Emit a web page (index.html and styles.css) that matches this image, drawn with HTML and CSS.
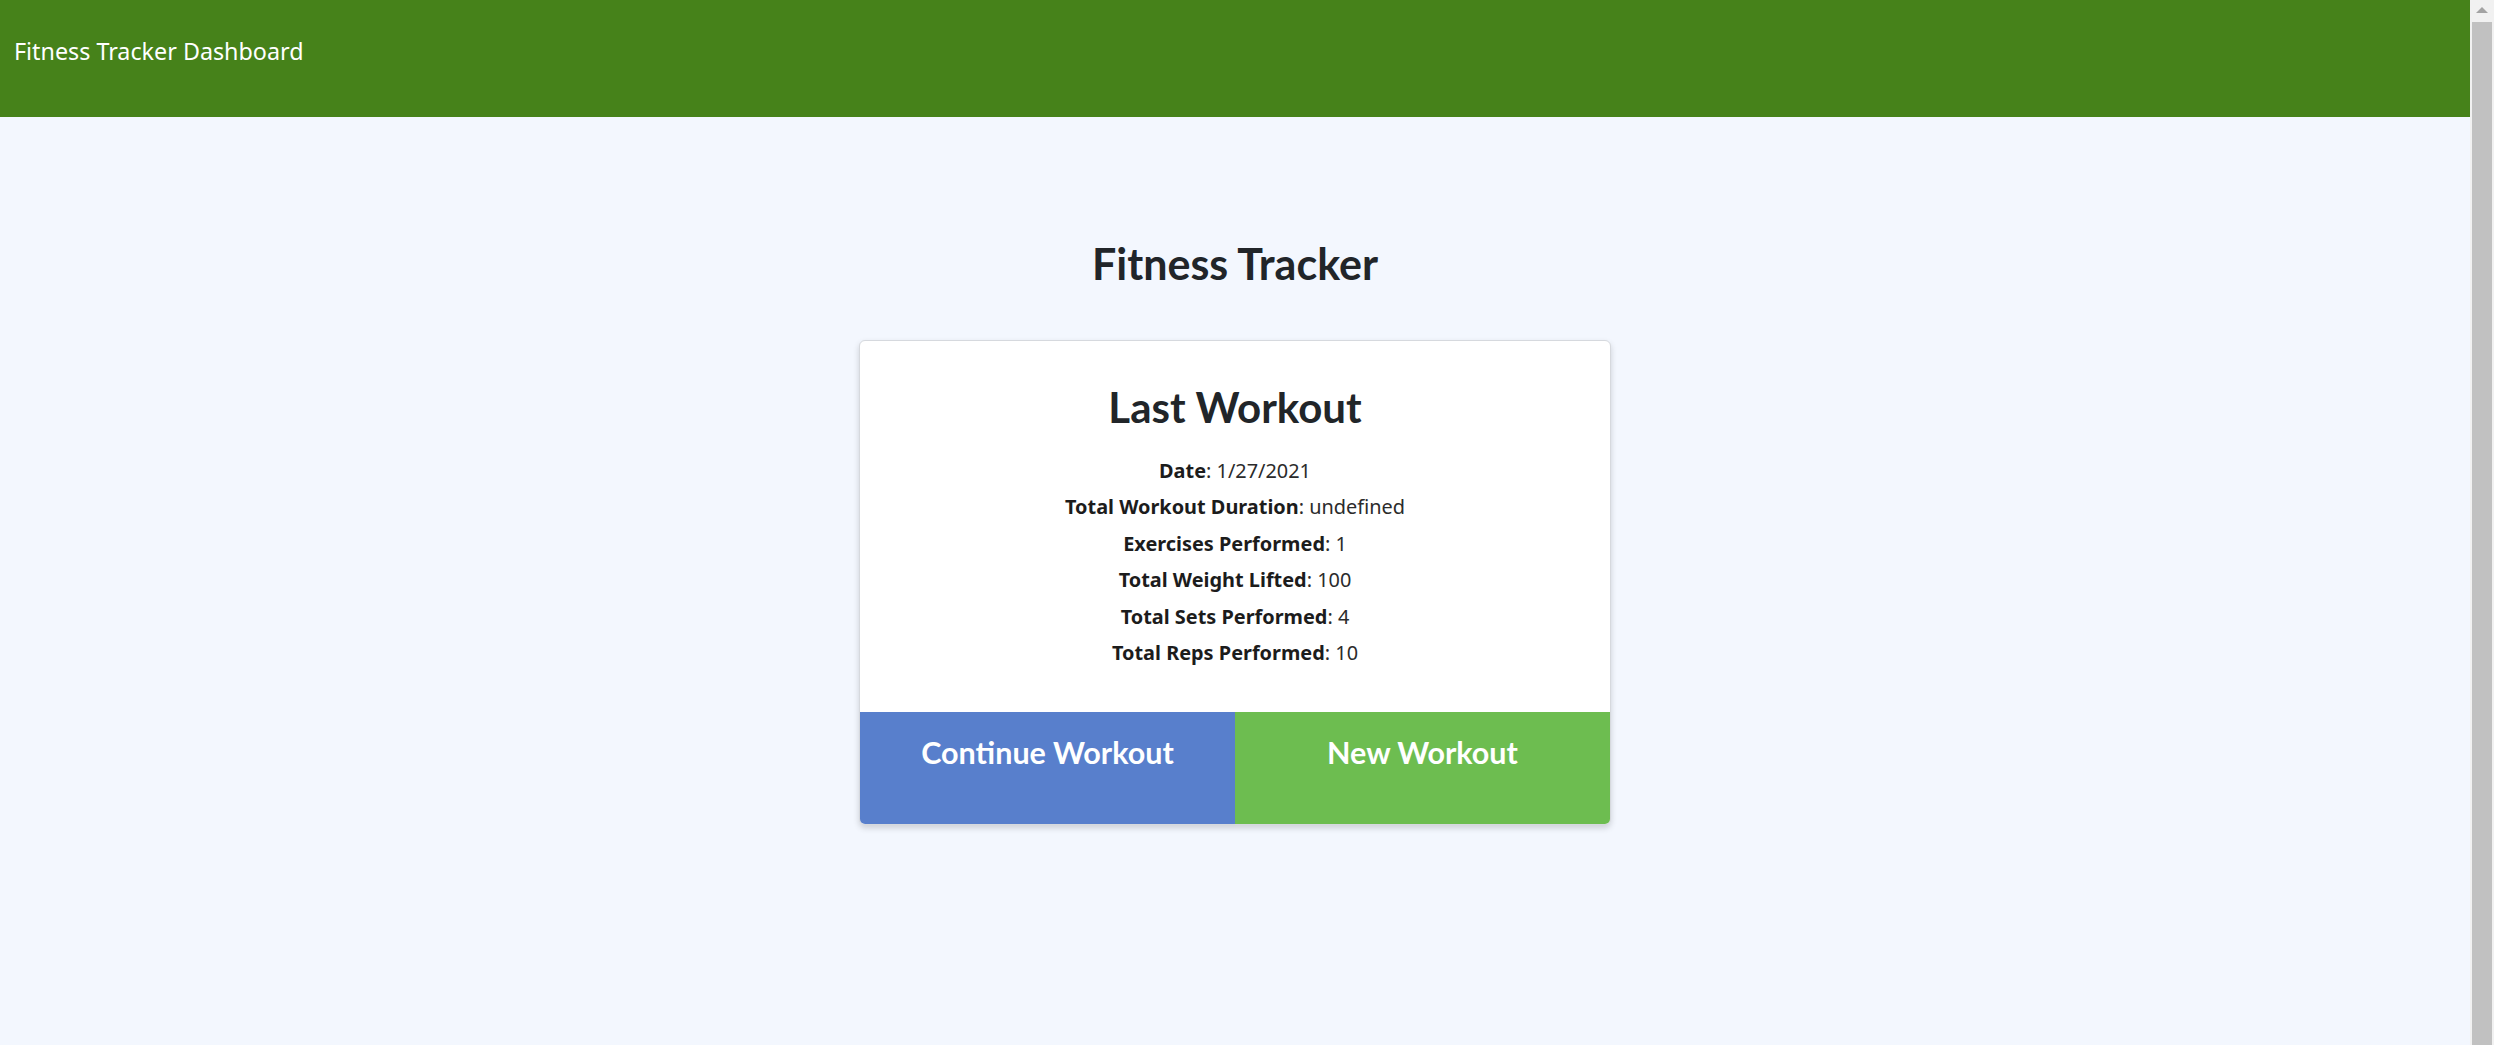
FILE: index.html
```html
<!DOCTYPE html>
<html lang="en">
<head>
<meta charset="utf-8">
<title>Fitness Tracker Dashboard</title>
<link rel="stylesheet" href="styles.css">
</head>
<body>
<div class="page">
  <div class="main">
    <header class="topbar">
      <span class="brand">Fitness Tracker Dashboard</span>
    </header>
    <main class="content">
      <h2 class="page-title">Fitness Tracker</h2>
      <section class="card">
        <div class="card-body">
          <h3 class="card-title">Last Workout</h3>
          <div class="stats">
            <p class="stat"><strong>Date</strong>: 1/27/2021</p>
            <p class="stat"><strong>Total Workout Duration</strong>: undefined</p>
            <p class="stat"><strong>Exercises Performed</strong>: 1</p>
            <p class="stat"><strong>Total Weight Lifted</strong>: 100</p>
            <p class="stat"><strong>Total Sets Performed</strong>: 4</p>
            <p class="stat"><strong>Total Reps Performed</strong>: 10</p>
          </div>
        </div>
        <div class="actions">
          <button class="btn btn-continue">Continue Workout</button>
          <button class="btn btn-new">New Workout</button>
        </div>
      </section>
    </main>
  </div>
  <div class="scrollbar">
    <div class="scroll-arrow"></div>
    <div class="scroll-thumb"></div>
  </div>
</div>
</body>
</html>
```
FILE: styles.css
```css
html, body {
  margin: 0;
  padding: 0;
  height: 100%;
}
body {
  background: #f3f7fe;
  font-family: Lato, "Noto Sans", sans-serif;
  color: #212121;
  overflow: hidden;
}
.page {
  display: flex;
  height: 1045px;
}
.main {
  flex: 1;
  display: flex;
  flex-direction: column;
  min-width: 0;
}
.topbar {
  background: #46821a;
  height: 117px;
  box-sizing: border-box;
  padding: 34px 0 0 14px;
}
.brand {
  font-family: "Noto Sans", "Open Sans", sans-serif;
  font-size: 23.3px;
  line-height: 34px;
  color: #ffffff;
}
.content {
  display: flex;
  flex-direction: column;
  align-items: center;
}
.page-title {
  margin: 121px 0 50px;
  font-size: 43px;
  font-weight: 700;
  line-height: 1.2;
  color: #212529;
}
.card {
  width: 750px;
  background: #ffffff;
  border: 1px solid #d6d9de;
  border-radius: 6px;
  box-shadow: 0 3px 6px rgba(0, 0, 0, 0.16);
  overflow: hidden;
  display: flex;
  flex-direction: column;
}
.card-body {
  padding: 41px 20px 40px;
  text-align: center;
}
.card-title {
  margin: 0 0 21px;
  font-size: 42px;
  font-weight: 700;
  line-height: 1.2;
  color: #212529;
}
.stats {
  display: flex;
  flex-direction: column;
}
.stat {
  margin: 0;
  font-family: "Noto Sans", "Open Sans", sans-serif;
  font-size: 19.9px;
  line-height: 36.5px;
  color: #2b2b2b;
}
.stat strong {
  font-weight: 700;
  color: #1c1c1c;
}
.actions {
  display: flex;
  height: 112px;
}
.btn {
  flex: 1;
  border: 0;
  margin: 0;
  padding: 22px 0 0;
  font-family: Lato, sans-serif;
  font-size: 30.5px;
  font-weight: 700;
  line-height: 36px;
  color: #ffffff;
  display: flex;
  justify-content: center;
  align-items: flex-start;
}
.btn-continue {
  background: #587fcc;
}
.btn-new {
  background: #6dbd50;
}
.scrollbar {
  width: 24px;
  background: #f1f1f1;
  display: flex;
  flex-direction: column;
  align-items: center;
}
.scroll-arrow {
  width: 0;
  height: 0;
  margin-top: 7px;
  border-left: 6px solid transparent;
  border-right: 6px solid transparent;
  border-bottom: 6px solid #a3a3a3;
}
.scroll-thumb {
  width: 20px;
  flex: 1;
  margin-top: 9px;
  background: #c1c1c1;
}
```
